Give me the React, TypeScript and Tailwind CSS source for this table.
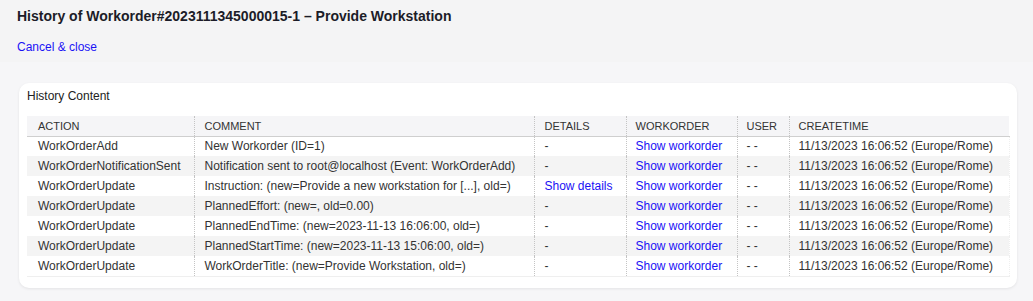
import React from "react";

type Row = { action: string; comment: string; details: string | null };

const rows: Row[] = [
  { action: "WorkOrderAdd", comment: "New Workorder (ID=1)", details: null },
  { action: "WorkOrderNotificationSent", comment: "Notification sent to root@localhost (Event: WorkOrderAdd)", details: null },
  { action: "WorkOrderUpdate", comment: "Instruction: (new=Provide a new workstation for [...], old=)", details: "Show details" },
  { action: "WorkOrderUpdate", comment: "PlannedEffort: (new=, old=0.00)", details: null },
  { action: "WorkOrderUpdate", comment: "PlannedEndTime: (new=2023-11-13 16:06:00, old=)", details: null },
  { action: "WorkOrderUpdate", comment: "PlannedStartTime: (new=2023-11-13 15:06:00, old=)", details: null },
  { action: "WorkOrderUpdate", comment: "WorkOrderTitle: (new=Provide Workstation, old=)", details: null },
];

const div = "border-l border-dotted border-[#c4c4c4]";

export default function App() {
  return (
    <div
      className="min-h-[301px] bg-[#f6f6f8] text-[#333]"
      style={{ fontFamily: '"Liberation Sans", Arial, sans-serif' }}
    >
      <div className="h-[62px] bg-[#f4f4f5] px-[17px] pt-[8px]">
        <h1 className="text-[14px] leading-[16px] font-bold text-[#1c1c28]">
          History of Workorder#2023111345000015-1 – Provide Workstation
        </h1>
        <a href="#" className="mt-[16px] block text-[12px] leading-[14px] text-[#1a12f5] w-fit">
          Cancel &amp; close
        </a>
      </div>
      <div className="px-[19px] pt-[21px] pb-[14px] w-[1016px] box-content">
        <div className="w-[998px] rounded-[10px] bg-white px-2 pt-[6px] pb-[11px] shadow-[0_1px_3px_rgba(0,0,0,0.08)]">
          <div className="text-[12px] leading-[14px] text-[#222] mb-[13px]">History Content</div>
          <table className="w-[982px] table-fixed border-collapse text-[12px] leading-[14px]">
            <colgroup>
              <col className="w-[167px]" />
              <col className="w-[340px]" />
              <col className="w-[92px]" />
              <col className="w-[111px]" />
              <col className="w-[52px]" />
              <col className="w-[220px]" />
            </colgroup>
            <thead>
              <tr className="h-[20px] bg-[#f5f5f7] border-b border-[#cfcfcf] text-[11px] text-[#333] text-left">
                <th className="font-normal pl-[11px] py-0">ACTION</th>
                <th className={`font-normal pl-[10px] py-0 ${div}`}>COMMENT</th>
                <th className={`font-normal pl-[10px] py-0 ${div}`}>DETAILS</th>
                <th className={`font-normal pl-[9px] py-0 ${div}`}>WORKORDER</th>
                <th className={`font-normal pl-[9px] py-0 ${div}`}>USER</th>
                <th className={`font-normal pl-[9px] py-0 ${div}`}>CREATETIME</th>
              </tr>
            </thead>
            <tbody>
              {rows.map((r, i) => (
                <tr
                  key={i}
                  className={`h-[20px] ${i % 2 === 1 ? "bg-[#f4f4f4]" : "bg-white"} ${i === rows.length - 1 ? "border-b border-[#efefef]" : ""}`}
                >
                  <td className="pl-[11px] py-0 whitespace-nowrap">{r.action}</td>
                  <td className={`pl-[10px] py-0 whitespace-nowrap ${div}`}>{r.comment}</td>
                  <td className={`pl-[10px] py-0 whitespace-nowrap ${div}`}>
                    {r.details ? <a href="#" className="text-[#1a12f5]">{r.details}</a> : "-"}
                  </td>
                  <td className={`pl-[9px] py-0 whitespace-nowrap ${div}`}>
                    <a href="#" className="text-[#1a12f5]">Show workorder</a>
                  </td>
                  <td className={`pl-[9px] py-0 whitespace-nowrap ${div}`}>- -</td>
                  <td className={`pl-[9px] py-0 whitespace-nowrap border-r border-r-[#efefef] ${div}`}>
                    11/13/2023 16:06:52 (Europe/Rome)
                  </td>
                </tr>
              ))}
            </tbody>
          </table>
        </div>
      </div>
    </div>
  );
}
